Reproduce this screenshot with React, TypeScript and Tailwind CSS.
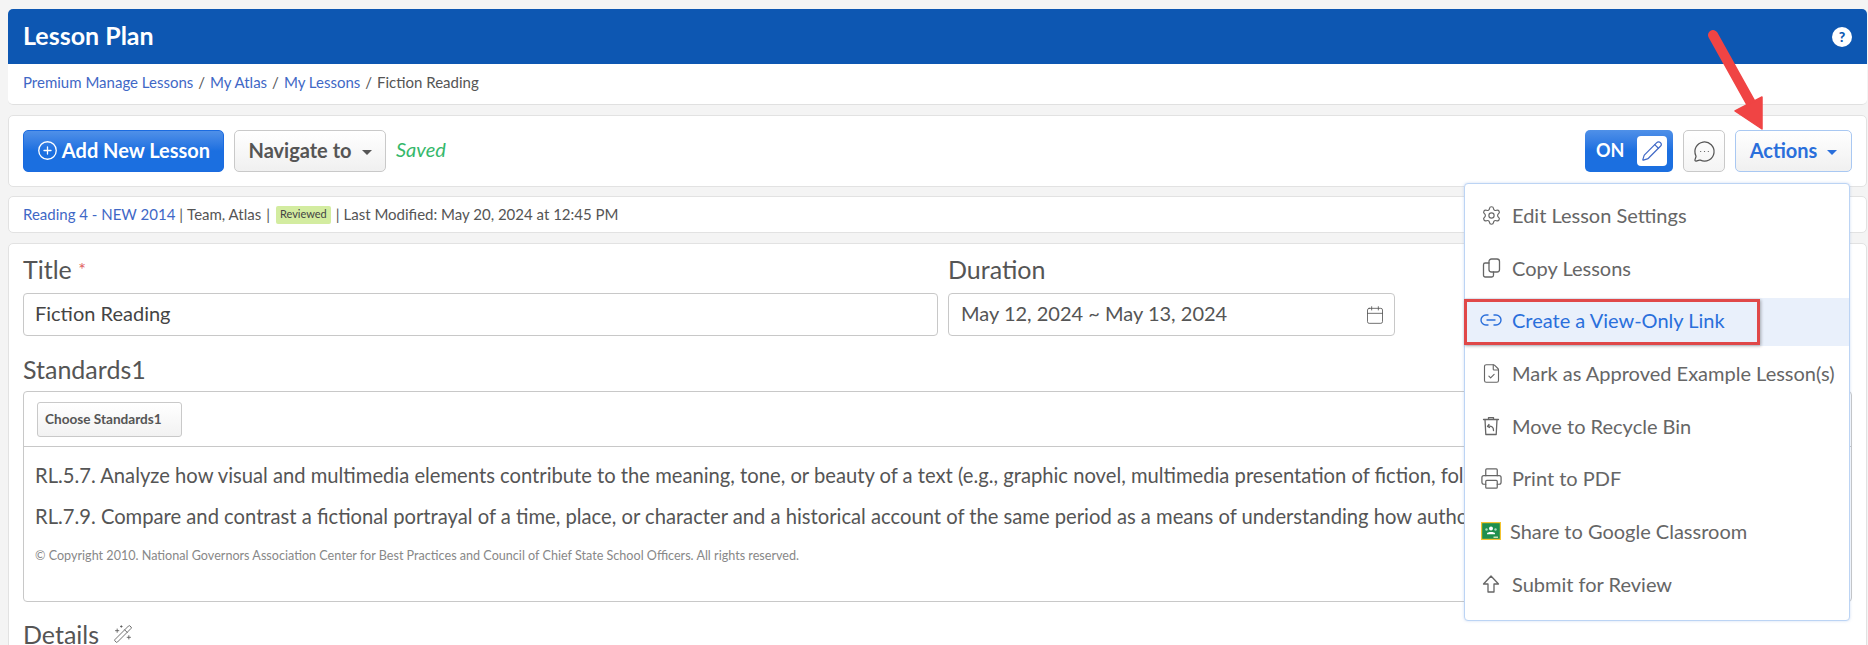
import React from 'react';
import { Settings, Link2, FileCheck, Printer, CirclePlus, Pencil, MessageCircleMore, Calendar, WandSparkles } from 'lucide-react';

const font = { fontFamily: '"Lato", "Open Sans", sans-serif' };

const Caret = ({ className }: { className: string }) => (
  <span className={`inline-block w-0 h-0 border-x-[5px] border-x-transparent border-t-[5px] ${className}`} />
);

const CopyIcon = () => (
  <svg width="19" height="20" viewBox="0 0 19 20" fill="none" stroke="currentColor" strokeWidth="1.3" strokeLinecap="round" strokeLinejoin="round">
    <rect x="7" y="1" width="10.5" height="13" rx="2.5" />
    <path d="M7 5H3.2A1.7 1.7 0 0 0 1.5 6.7v10.6A1.7 1.7 0 0 0 3.2 19h6.6a1.7 1.7 0 0 0 1.7-1.7V14" />
  </svg>
);

const RecycleIcon = () => (
  <svg width="18" height="20" viewBox="0 0 18 20" fill="none" stroke="currentColor" strokeWidth="1.3" strokeLinecap="round" strokeLinejoin="round">
    <path d="M1.5 3.5h15M6.5 3.5V1.6h5v1.9M3 3.5l.8 15h10.4l.8-15" />
    <path d="M7 8.5 5.5 10.5 7.5 11.5M5.7 10.5c3.5-1 6 .5 5.8 4" />
  </svg>
);

const ArrowUpOutline = () => (
  <svg width="18" height="20" viewBox="0 0 18 20" fill="none" stroke="currentColor" strokeWidth="1.3" strokeLinejoin="round">
    <path d="M9 2 1.5 10H6v8h6v-8h4.5z" />
  </svg>
);

const ClassroomIcon = () => (
  <svg width="20" height="18" viewBox="0 0 20 18">
    <rect width="20" height="18" fill="#f4c430" />
    <rect x="1.2" y="1.2" width="17.6" height="15.6" fill="#1f8f4e" />
    <circle cx="10" cy="6.5" r="2" fill="#fff" />
    <path d="M6 11.5c0-2 8-2 8 0v.8H6z" fill="#fff" />
    <circle cx="5.5" cy="7.5" r="1.2" fill="#a9dcbc" />
    <circle cx="14.5" cy="7.5" r="1.2" fill="#a9dcbc" />
    <rect x="12.5" y="14.6" width="4.5" height="1.2" fill="#f7f3d0" />
  </svg>
);

const menuItems = [
  { label: 'Edit Lesson Settings', icon: <Settings size={21} strokeWidth={1.3} />, gap: 'gap-[8px]' },
  { label: 'Copy Lessons', icon: <CopyIcon />, gap: 'gap-[8px]' },
  { label: 'Create a View-Only Link', icon: <Link2 size={24} strokeWidth={1.4} />, gap: 'gap-[8px]', active: true },
  { label: 'Mark as Approved Example Lesson(s)', icon: <FileCheck size={21} strokeWidth={1.3} />, gap: 'gap-[8px]' },
  { label: 'Move to Recycle Bin', icon: <RecycleIcon />, gap: 'gap-[8px]' },
  { label: 'Print to PDF', icon: <Printer size={23} strokeWidth={1.3} />, gap: 'gap-[8px]' },
  { label: 'Share to Google Classroom', icon: <ClassroomIcon />, gap: 'gap-[6px]' },
  { label: 'Submit for Review', icon: <ArrowUpOutline />, gap: 'gap-[8px]' },
];

const ActionsMenu = () => (
  <div className="absolute z-10 top-[53px] right-[2px] w-[386px] h-[438px] bg-white border border-[#bcd4f4] rounded-[4px] pt-[9px] shadow-[0_0_3px_rgba(120,160,220,0.35)]">
    {menuItems.map((item) => (
      <div
        key={item.label}
        className={`h-[48px] mb-[4.7px] flex items-center pl-[13px] pb-[4px] text-[20px] ${item.gap} ${item.active ? 'bg-[#e9f0fb] text-[#2a6fdb]' : 'text-[#666]'}`}
      >
        <span className="w-[26px] flex justify-center">{item.icon}</span>
        <span>{item.label}</span>
      </div>
    ))}
    {/* annotation box */}
    <div className="absolute top-[115px] -left-[1px] w-[296px] h-[46px] border-[3px] border-[#e04848] shadow-[1px_1px_3px_rgba(0,0,0,0.3)]" />
  </div>
);

const RedArrow = () => (
  <svg className="absolute z-20 -top-[100px] right-[83px]" width="64" height="104" viewBox="0 0 64 104" fill="none">
    <path d="M8 5 47 75" stroke="#f04444" strokeWidth="10" strokeLinecap="round" />
    <path d="M57 99 30 81 57 67z" fill="#f04444" stroke="#f04444" strokeWidth="1.5" strokeLinejoin="round" />
  </svg>
);

const Card = ({ className, children }: { className: string; children: React.ReactNode }) => (
  <div className={`bg-white border border-[#e2e2e2] rounded-[5px] ${className}`}>{children}</div>
);

export default function App() {
  return (
    <div className="w-[1868px] h-[645px] overflow-hidden bg-[#f4f4f4] pt-[9px] pl-[8px] pr-[1px] text-[#555]" style={font}>
      {/* Page header */}
      <div className="rounded-t-[5px] bg-[#0d57b2] h-[55px] flex items-center justify-between pl-[15px] pr-[15px]">
        <h1 className="text-[25px] font-bold text-white pb-[2px]">Lesson Plan</h1>
        <span className="w-[20px] h-[20px] rounded-full bg-white text-[#0d57b2] text-[14px] font-black flex items-center justify-center">?</span>
      </div>
      <div className="bg-white border-b border-[#e0e0e0] rounded-b-[5px] h-[41px] flex items-center pl-[15px] pb-[3px] text-[15px]">
        <a className="text-[#3f68c6]">Premium Manage Lessons</a>
        <span className="mx-[5px]">/</span>
        <a className="text-[#3f68c6]">My Atlas</a>
        <span className="mx-[5px]">/</span>
        <a className="text-[#3f68c6]">My Lessons</a>
        <span className="mx-[5px]">/</span>
        <span>Fiction Reading</span>
      </div>

      {/* Toolbar */}
      <Card className="relative mt-[10px] h-[72px] flex items-center pl-[14px] pr-[14px]">
        <button className="h-[42px] w-[201px] rounded-[5px] bg-linear-to-b from-[#4f90e8] to-[#1b6fe0] to-50% border border-[#1b6be0] text-white text-[20px] font-bold flex items-center justify-center gap-[4px] pb-[2px]">
          <CirclePlus size={21} strokeWidth={1.5} />
          Add New Lesson
        </button>
        <button className="ml-[10px] h-[42px] w-[152px] rounded-[5px] bg-linear-to-b from-white to-[#f0f0f0] border border-[#c9c9c9] text-[20px] font-bold text-[#555] flex items-center justify-center gap-[10px] pb-[2px]">
          Navigate to
          <Caret className="border-t-[#555] mt-[5px]" />
        </button>
        <span className="ml-[10px] italic text-[20px] text-[#35b86b] -mt-[4px]">Saved</span>

        <div className="ml-auto flex items-center gap-[10px]">
          <div className="h-[42px] w-[88px] rounded-[5px] bg-linear-to-b from-[#4f90e8] to-[#1b6fe0] to-50% flex items-center pl-[11px] justify-between pr-[6px]">
            <span className="text-white font-bold text-[18px] pb-[2px]">ON</span>
            <span className="w-[30px] h-[30px] rounded-[4px] bg-white flex items-center justify-center text-[#3f68c6]">
              <Pencil size={22} strokeWidth={1.3} />
            </span>
          </div>
          <button className="h-[42px] w-[42px] rounded-[5px] bg-linear-to-b from-white to-[#f4f4f4] border border-[#c9c9c9] flex items-center justify-center text-[#555]">
            <MessageCircleMore size={23} strokeWidth={1.3} />
          </button>
          <div className="relative">
            <button className="h-[42px] w-[117px] rounded-[5px] bg-linear-to-b from-white to-[#f0f0f0] border border-[#a9c8f2] text-[20px] font-bold text-[#2a6fdb] flex items-center justify-center gap-[10px] pb-[2px]">
              Actions
              <Caret className="border-t-[#2a6fdb] mt-[5px]" />
            </button>
            <RedArrow />
            <ActionsMenu />
          </div>
        </div>
      </Card>

      {/* Lesson info */}
      <Card className="mt-[9px] h-[37px] flex items-center pl-[14px] text-[15px]">
        <a className="text-[#3f68c6]">Reading 4 - NEW 2014</a>
        <span className="mx-[4px]">|</span>
        <span>Team, Atlas</span>
        <span className="mx-[5px]">|</span>
        <span className="h-[18px] px-[4px] rounded-[2px] bg-[#d3eca0] text-[11px] text-[#444] flex items-center mx-[1px]">Reviewed</span>
        <span className="mx-[4px]">|</span>
        <span>Last Modified: May 20, 2024 at 12:45 PM</span>
      </Card>

      {/* Lesson form */}
      <Card className="mt-[10px] h-[420px] px-[14px] pt-[9px]">
        <div className="flex gap-[10px]">
          <div className="w-[915px]">
            <div className="text-[25px] leading-[33px] mb-[7px]">Title <span className="text-[#e06060] text-[18px] align-top">*</span></div>
            <div className="h-[43px] border border-[#c8c8c8] rounded-[4px] flex items-center pl-[11px] pb-[4px] text-[20px] text-[#444]">Fiction Reading</div>
          </div>
          <div className="w-[447px]">
            <div className="text-[25px] leading-[33px] mb-[7px]">Duration</div>
            <div className="h-[43px] border border-[#c8c8c8] rounded-[4px] flex items-center justify-between pl-[12px] pr-[9px] text-[20px]">
              <span className="pb-[4px]">May 12, 2024 ~ May 13, 2024</span>
              <Calendar size={20} strokeWidth={1} />
            </div>
          </div>
        </div>

        <div className="text-[25px] leading-[33px] mt-[17px] mb-[5px]">Standards1</div>
        <div className="h-[211px] border border-[#c8c8c8] rounded-[4px]">
          <div className="h-[55px] border-b border-[#c8c8c8] pl-[13px] pt-[10px]">
            <button className="h-[35px] w-[145px] rounded-[3px] border border-[#c9c9c9] bg-linear-to-b from-white to-[#f2f2f2] text-[13.6px] font-bold text-left pl-[7px] pb-[1px]">Choose Standards1</button>
          </div>
          {/* the menu covers the rest of these lines */}
          <div className="pl-[11px] pr-[388px] overflow-hidden whitespace-nowrap">
            <p className="text-[20.2px] leading-[24px] mt-[16px]">RL.5.7. Analyze how visual and multimedia elements contribute to the meaning, tone, or beauty of a text (e.g., graphic novel, multimedia presentation of fiction, folktale, myth, poem).</p>
            <p className="text-[20.2px] leading-[24px] mt-[17px]">RL.7.9. Compare and contrast a fictional portrayal of a time, place, or character and a historical account of the same period as a means of understanding how authors of fiction use or alter history.</p>
            <p className="text-[12.6px] leading-[16px] mt-[20px] text-[#888]">© Copyright 2010. National Governors Association Center for Best Practices and Council of Chief State School Officers. All rights reserved.</p>
          </div>
        </div>

        <div className="mt-[21px] flex items-center gap-[14px] text-[25px] leading-[22px]">
          Details
          <WandSparkles size={20} strokeWidth={1} />
        </div>
      </Card>
    </div>
  );
}
